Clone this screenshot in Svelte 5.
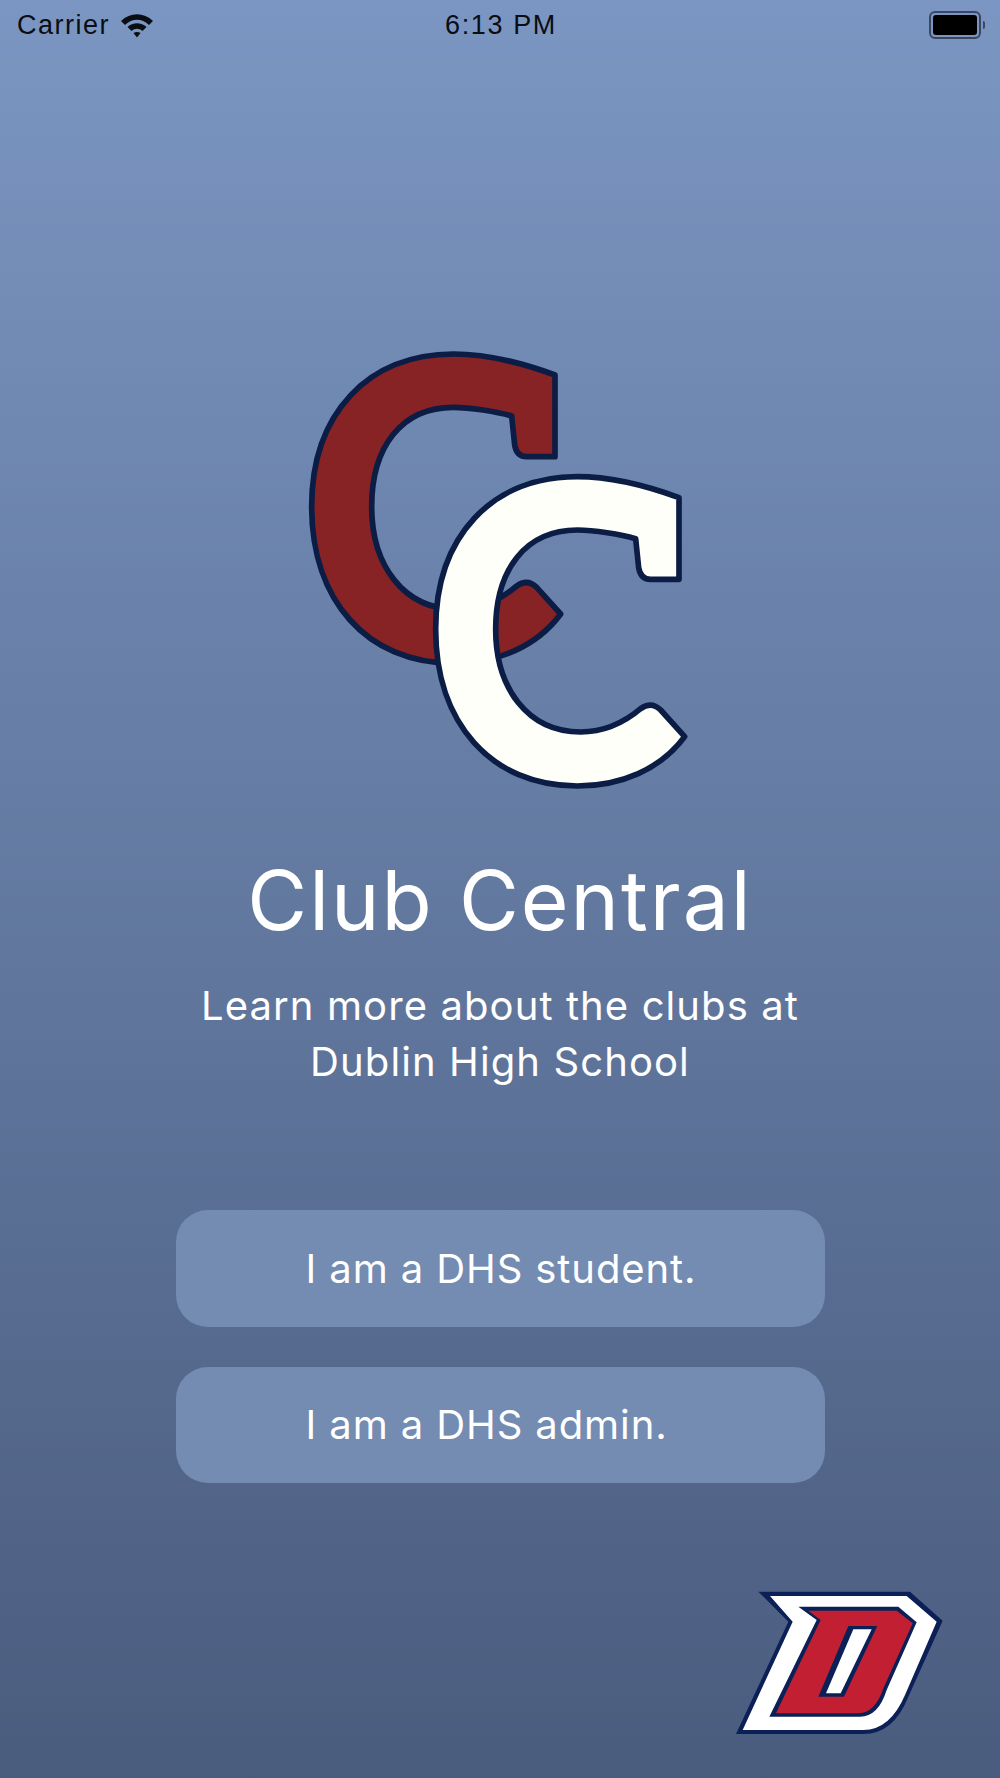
<script>
  const cPath = 'M795 135 V380 H710 Q680 380 674 345 L665 258 C620 245 540 232 490 232 C335 232 245 350 245 530 C245 705 340 838 500 838 C570 838 630 810 680 768 Q712 745 740 772 L812 852 C740 950 620 1000 490 1000 C230 1000 65 810 65 530 C65 250 235 72 490 72 C600 72 700 100 795 135 Z';
  const buttons = ['I am a DHS student.', 'I am a DHS admin.'];
</script>

<div class="screen">
  <header class="status">
    <div class="left">
      <span class="carrier">Carrier</span>
      <svg class="wifi" viewBox="2 0 32 26" width="36" height="26">
        <path d="M2 9 C11 0 25 0 34 9 L30 13 C23 6 13 6 6 13 Z" />
        <path d="M8.5 15 C14 10 22 10 27.5 15 L23.5 19 C20 16 16 16 12.5 19 Z" />
        <path d="M14.5 21 C16.5 19.5 19.5 19.5 21.5 21 L18 25.5 Z" />
      </svg>
    </div>
    <span class="time">6:13 PM</span>
    <div class="right">
      <div class="battery"><div class="level"></div></div>
      <div class="nub"></div>
    </div>
  </header>

  <svg class="logo" viewBox="0 0 1260 1410" width="420" height="470">
    <path d={cPath} fill="#872324" stroke="#0b1c45" stroke-width="17" stroke-linejoin="round" />
    <path d={cPath} transform="translate(372 368)" fill="#fffffa" stroke="#0b1c45" stroke-width="17" stroke-linejoin="round" />
  </svg>

  <h1>Club Central</h1>
  <p class="sub">Learn more about the clubs at<br />Dublin High School</p>

  <div class="actions">
    {#each buttons as label}
      <button>{label}</button>
    {/each}
  </div>

  <svg class="mark" viewBox="0 0 720 570" width="240" height="190">
    <path d="M115 65 H570 L668 152 L565 380 Q520 492 430 492 H48 L205 155 Z" fill="#0c2058" />
    <path d="M150 78 H560 L650 155 L555 375 Q510 480 430 480 H68 L218 155 Z" fill="#fff" />
    <path d="M235 110 H535 L590 157 L500 360 Q475 440 420 440 H148 L290 150 Z" fill="#0c2058" />
    <path d="M265 122 H530 L578 160 L490 355 Q465 430 415 430 H168 L302 150 Z" fill="#c22032" />
    <path d="M385 168 H472 L372 380 H295 Z" fill="#0c2058" />
    <path d="M400 178 H455 L362 370 H318 Z" fill="#fff" />
  </svg>
</div>

<style>
  :global(body) {
    margin: 0;
  }

  .screen {
    height: 1778px;
    display: flex;
    flex-direction: column;
    align-items: center;
    overflow: hidden;
    background: linear-gradient(#7b96c2, #4a5c7e);
    font-family: Inter, sans-serif;
    color: #fff;
  }

  .status {
    width: 100%;
    height: 50px;
    box-sizing: border-box;
    padding: 0 15px 0 17px;
    display: grid;
    grid-template-columns: 1fr auto 1fr;
    align-items: center;
    color: #0a0d14;
    font-family: 'Liberation Sans', sans-serif;
    font-size: 27px;
  }

  .left {
    display: flex;
    align-items: center;
    gap: 9px;
  }

  .carrier {
    letter-spacing: 1.5px;
  }

  .time {
    letter-spacing: 1.6px;
  }

  .wifi {
    fill: #0a0d14;
  }

  .right {
    display: flex;
    justify-content: flex-end;
    align-items: center;
    gap: 2px;
  }

  .battery {
    box-sizing: content-box;
    width: 44px;
    height: 20px;
    padding: 2px;
    border: 2px solid #3b4760;
    border-radius: 6px;
  }

  .level {
    height: 100%;
    background: #000;
    border-radius: 3px;
  }

  .nub {
    width: 2px;
    height: 8px;
    background: #3b4760;
    border-radius: 0 2px 2px 0;
  }

  .logo {
    margin-top: 280px;
    flex: none;
  }

  h1 {
    margin: 61px 0 0;
    font-size: 82px;
    line-height: 80px;
    font-weight: 400;
    letter-spacing: 2px;
  }

  .sub {
    margin: 37px 0 0;
    font-size: 40px;
    line-height: 56px;
    letter-spacing: 1.1px;
    text-align: center;
  }

  .actions {
    margin-top: 120px;
    display: flex;
    flex-direction: column;
    gap: 40px;
  }

  button {
    width: 649px;
    height: 116.5px;
    padding: 0 0 0 130px;
    border: none;
    border-radius: 32px;
    background: #748bb2;
    color: #fff;
    font: inherit;
    font-size: 40px;
    letter-spacing: 0.9px;
    text-align: left;
  }

  .mark {
    margin-top: 87px;
    margin-right: 40px;
    align-self: flex-end;
    flex: none;
  }
</style>
